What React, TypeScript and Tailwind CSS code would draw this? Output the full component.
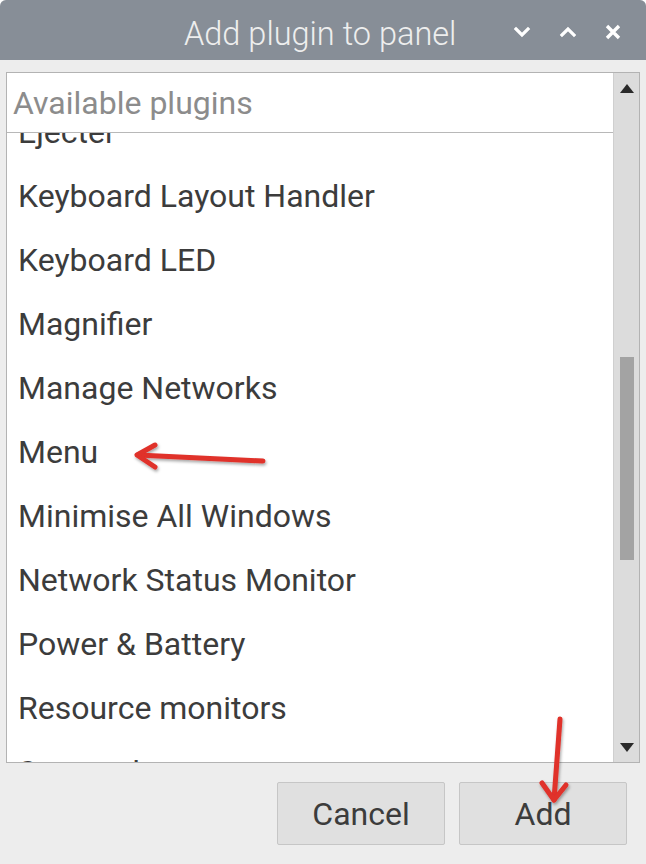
import React from "react";

const items = [
  "Ejecter",
  "Keyboard Layout Handler",
  "Keyboard LED",
  "Magnifier",
  "Manage Networks",
  "Menu",
  "Minimise All Windows",
  "Network Status Monitor",
  "Power & Battery",
  "Resource monitors",
  "Screenshot",
];

export default function App() {
  return (
    <div className="relative w-[646px] h-[864px] bg-[#ededed] flex flex-col overflow-hidden rounded-t-[6px] [font-family:Roboto,'Liberation_Sans',sans-serif]">
      {/* Title bar */}
      <div className="h-[60px] shrink-0 bg-[#878e97] flex items-center">
        <div className="flex-1 pl-[184px] text-[32.5px] font-light text-[#eeeeee] leading-none pt-[8px] whitespace-nowrap">
          Add plugin to panel
        </div>
        <div className="flex items-center gap-[26px] pr-[24px] pt-[4px]">
          <svg width="20" height="14" viewBox="0 0 20 14">
            <path d="M4 4 L10 10 L16 4" stroke="#ffffff" strokeWidth="3.2" fill="none" strokeLinecap="square" />
          </svg>
          <svg width="20" height="14" viewBox="0 0 20 14">
            <path d="M4 10 L10 4 L16 10" stroke="#ffffff" strokeWidth="3.2" fill="none" strokeLinecap="square" />
          </svg>
          <svg width="18" height="18" viewBox="0 0 18 18">
            <path d="M3 3 L15 15 M15 3 L3 15" stroke="#ffffff" strokeWidth="3.4" fill="none" />
          </svg>
        </div>
      </div>

      {/* Body */}
      <div className="flex-1 flex flex-col px-[6px] pt-[12px]">
        <div className="h-[691px] border border-[#b3b3b3] flex">
          <div className="flex-1 bg-white flex flex-col overflow-hidden">
            <div className="h-[60px] shrink-0 border-b border-[#b8b8b8] flex items-center pl-[6px] text-[32px] text-[#8c8c8c] relative z-10 bg-white leading-none">
              Available plugins
            </div>
            <div className="flex-1 overflow-hidden">
              <div className="-mt-[33px]">
                {items.map((t) => (
                  <div key={t} className="h-[64px] flex items-center pl-[11px] text-[32px] text-[#3c3c3c] leading-none whitespace-nowrap">
                    {t}
                  </div>
                ))}
              </div>
            </div>
          </div>
          <div className="w-[26px] bg-[#dcdcdc] border-l border-[#cfcfcf] flex flex-col items-center">
            <svg width="14" height="9" viewBox="0 0 14 9" className="mt-[11px]">
              <path d="M7 0 L14 9 L0 9 Z" fill="#2a2a2a" />
            </svg>
            <div className="w-[14px] h-[203px] bg-[#a3a3a3] mt-[264px]" />
            <div className="flex-1" />
            <svg width="14" height="9" viewBox="0 0 14 9" className="mb-[10px]">
              <path d="M0 0 L14 0 L7 9 Z" fill="#2a2a2a" />
            </svg>
          </div>
        </div>

        <div className="flex justify-end gap-[14px] pt-[19px] pr-[13px]">
          <button className="w-[168px] h-[63px] bg-[#e0e0e0] border border-[#c6c6c6] rounded-[2px] text-[32px] text-[#3c3c3c] leading-none">
            Cancel
          </button>
          <button className="w-[168px] h-[63px] bg-[#e0e0e0] border border-[#c6c6c6] rounded-[2px] text-[32px] text-[#3c3c3c] leading-none">
            Add
          </button>
        </div>
      </div>

      {/* Annotation arrows */}
      <svg className="absolute left-0 top-0 pointer-events-none" width="646" height="864" viewBox="0 0 646 864">
        <defs>
          <filter id="sh" x="-20%" y="-20%" width="140%" height="140%">
            <feDropShadow dx="1" dy="2" stdDeviation="1.5" floodColor="#000" floodOpacity="0.35" />
          </filter>
        </defs>
        <g filter="url(#sh)" stroke="#e0302a" strokeWidth="5" strokeLinecap="round" strokeLinejoin="round" fill="none">
          <path d="M263 461 L138 455" />
          <path d="M155 445 L137 455 L155 467" />
          <path d="M560 719 L554 800" />
          <path d="M542 783 L554 800 L566 785" />
        </g>
      </svg>
    </div>
  );
}
